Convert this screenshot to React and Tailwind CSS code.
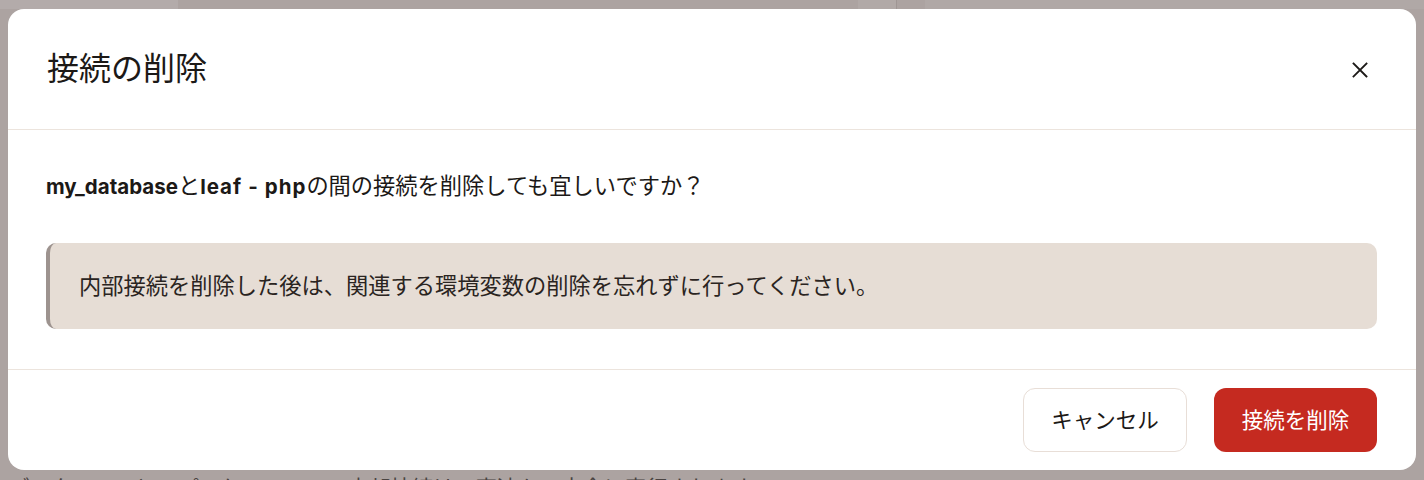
import React from "react";

const font = { fontFamily: '"Inter", "Noto Sans CJK JP", sans-serif' };

export default function App() {
  return (
    <div className="relative w-[1424px] h-[480px] overflow-hidden bg-[#aca3a1]" style={font}>
      {/* background page (dimmed) */}
      <div className="flex flex-col h-full">
        <div className="flex h-[9px] shrink-0">
          <div className="w-[178px] bg-[#b3abaa]" />
          <div className="w-[680px] bg-[#aca3a1]" />
          <div className="w-[39px] bg-[#b1a9a7] border-r border-[#9f9694]" />
          <div className="w-[28px] bg-[#aca3a1]" />
          <div className="flex-1 bg-[#b0a8a6]" />
        </div>
        <div className="flex-1" />
        <div className="h-[8px] overflow-visible pl-[8px] text-[21.33px] leading-[32px] text-[#4a4341] whitespace-nowrap">
          データベースとアプリケーションの内部接続は、高速かつ安全に実行されます。
        </div>
      </div>

      {/* modal */}
      <div className="absolute left-[8px] top-[9px] w-[1408px] bg-white rounded-[16px] text-[#1c1917] flex flex-col">
        <div className="h-[121px] flex items-center justify-between pl-[39px] pr-[48px] border-b border-[#ece4dd]">
          <h2 className="text-[32px] leading-[44px] font-normal">接続の削除</h2>
          <svg width="16" height="16" viewBox="0 0 16 16" className="mt-[1px]">
            <path d="M1.5 1.5L14.5 14.5M14.5 1.5L1.5 14.5" stroke="#1c1917" strokeWidth="1.8" strokeLinecap="square" />
          </svg>
        </div>
        <div className="pl-[38px] pr-[39px] pt-[40px] pb-[40px] flex flex-col gap-[40px] border-b border-[#ece4dd]">
          <p className="text-[22.25px] leading-[32px]">
            <span className="font-bold text-[20.5px]">my_database</span>と<span className="font-bold text-[20.5px] tracking-[1px]">leaf<span className="mx-[6px]">-</span>php</span>の間の接続を削除しても宜しいですか？
          </p>
          <div className="bg-[#e6ddd5] rounded-[10px] border-l-4 border-[#9d938f] pl-[29px] py-[27px] text-[22.25px] leading-[32px] text-[#2a2421]">
            内部接続を削除した後は、関連する環境変数の削除を忘れずに行ってください。
          </div>
        </div>
        <div className="h-[100px] flex items-center justify-end gap-[27px] pr-[39px]">
          <button className="w-[164px] h-[64px] rounded-[12px] border border-[#e8ded7] bg-white text-[21.5px] text-[#1c1917]">
            キャンセル
          </button>
          <button className="w-[163px] h-[64px] rounded-[12px] bg-[#c52a20] text-[21.5px] text-white">
            接続を削除
          </button>
        </div>
      </div>
    </div>
  );
}
